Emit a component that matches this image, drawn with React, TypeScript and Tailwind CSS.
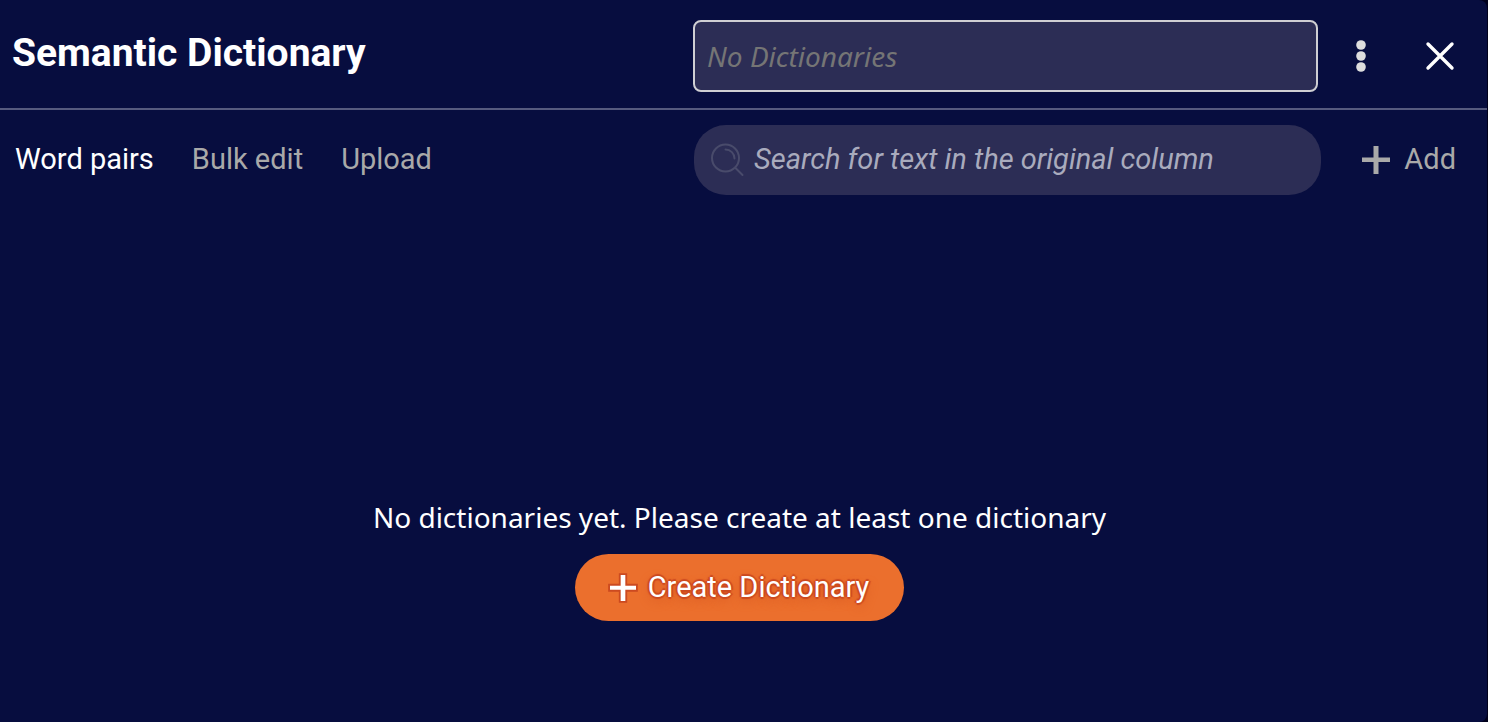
import React, { useState } from 'react';

const tabs = ['Word pairs', 'Bulk edit', 'Upload'];

const PlusIcon = ({ className }: { className?: string }) => (
  <svg viewBox="0 0 28 28" className={className} fill="currentColor" aria-hidden="true">
    <path d="M11.5 0h5v11.5H28v4.500H16.500V28h-5V16H0v-4.500h11.500z" />
  </svg>
);

const SearchIcon = () => (
  <svg
    viewBox="0 0 34 34"
    className="h-[34px] w-[34px] shrink-0 text-[#494b6b]"
    fill="none"
    stroke="currentColor"
    strokeWidth="2"
    strokeLinecap="round"
    aria-hidden="true"
  >
    <circle cx="15.500" cy="15" r="13.500" />
    <path d="M15.500 6.500a9 9 0 0 1 9 9" />
    <path d="M25.500 25l7 7" />
  </svg>
);

const App = () => {
  const [activeTab, setActiveTab] = useState<string>('Word pairs');
  const [dictionary, setDictionary] = useState<string>('');
  const [search, setSearch] = useState<string>('');

  return (
    <div className="min-h-screen bg-[#00001c] pr-px font-[Roboto,sans-serif]">
      <div className="min-h-screen rounded-r-lg bg-[#070d3f]">
        <header className="flex items-center border-b-2 border-[#565a7e] pt-5 pb-4 pl-3 pr-7">
          <h1 className="flex-1 pb-1.5 text-[39px] leading-[44px] font-bold text-white">Semantic Dictionary</h1>
          <input
            type="text"
            aria-label="Dictionary"
            placeholder="No Dictionaries"
            value={dictionary}
            onChange={(e) => setDictionary(e.target.value)}
            className="h-[72px] w-[42vw] rounded-lg border-2 border-[#cfcfd3] bg-[#2c2d55] px-3 font-['Noto_Sans',sans-serif] text-[28px] text-white italic placeholder:text-[#757575]"
          />
          <div className="flex w-[141px] items-center justify-between pl-7">
            <button type="button" aria-label="More options" className="flex w-[30px] justify-center text-[#dedede]">
              <svg viewBox="0 0 10 32" className="h-8 w-[10px]" fill="currentColor" aria-hidden="true">
                <circle cx="5" cy="5" r="4.800" />
                <circle cx="5" cy="16" r="4.800" />
                <circle cx="5" cy="27" r="4.800" />
              </svg>
            </button>
            <button type="button" aria-label="Close" className="text-white">
              <svg viewBox="0 0 38 38" className="h-[38px] w-[38px]" stroke="currentColor" strokeWidth="3.400" strokeLinecap="round" aria-hidden="true">
                <path d="M7 7l24 24M31 7L7 31" />
              </svg>
            </button>
          </div>
        </header>

        <div className="flex items-center pt-[15px] pl-[15px] pr-7">
          <nav className="flex flex-1 gap-[38px] pb-0.5 text-[29px] leading-9">
            {tabs.map((tab) => (
              <button
                key={tab}
                type="button"
                onClick={() => setActiveTab(tab)}
                className={tab === activeTab ? 'text-white' : 'text-[#a9a9a9]'}
              >
                {tab}
              </button>
            ))}
          </nav>
          <label className="flex h-[70px] w-[calc(42vw+2px)] items-center gap-2.5 rounded-[32px] bg-[#2c2d55] px-4">
            <SearchIcon />
            <input
              type="text"
              aria-label="Search"
              placeholder="Search for text in the original column"
              value={search}
              onChange={(e) => setSearch(e.target.value)}
              className="min-w-0 flex-1 text-[29px] text-white italic outline-none placeholder:text-[#a9abbd]"
            />
          </label>
          <button type="button" className="flex w-[138px] items-center justify-end gap-3.5 pr-[3px] text-[29px] text-[#a9a9a9]">
            <PlusIcon className="h-7 w-7" />
            Add
          </button>
        </div>

        <main className="flex flex-col items-center gap-[19px] pl-4 pr-6 pt-[304px] pb-[100px]">
          <p className="font-['Noto_Sans',sans-serif] text-[28px] leading-9 text-white">
            No dictionaries yet. Please create at least one dictionary
          </p>
          <button
            type="button"
            className="flex h-[67px] items-center gap-3 rounded-full bg-[#eb6f2d] px-[35px] text-[29px] text-white [text-shadow:2px_0_1px_#cc4a20,-2px_0_1px_#cc4a20,0_2px_1px_#cc4a20,0_-2px_1px_#cc4a20,0_4px_10px_#d95a22]"
          >
            <PlusIcon className="h-[26px] w-[26px] overflow-visible stroke-[#cc4a20] stroke-4 [paint-order:stroke]" />
            Create Dictionary
          </button>
        </main>
      </div>
    </div>
  );
};

export default App;
